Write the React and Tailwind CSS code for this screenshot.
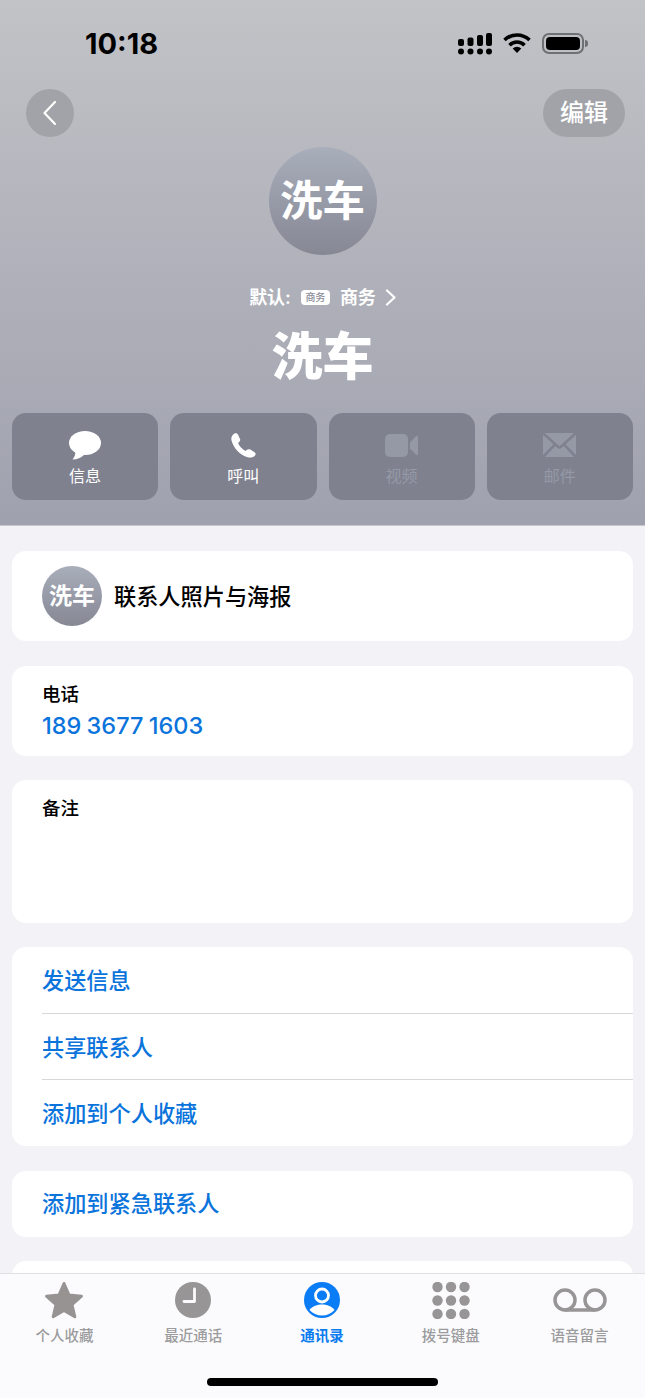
const FONT = "font-['Inter','Noto_Sans_CJK_SC',sans-serif]";

function Signal() {
  return (
    <svg width="34" height="22" viewBox="0 0 34 22" fill="black">
      <rect x="0" y="6" width="6" height="7" rx="2" />
      <rect x="9.500" y="4.500" width="6" height="8.500" rx="2" />
      <rect x="19" y="2" width="6" height="11" rx="2" />
      <rect x="28" y="0" width="6" height="13" rx="2" />
      <circle cx="3" cy="18.500" r="3" />
      <circle cx="12.500" cy="18.500" r="3" />
      <circle cx="22" cy="18.500" r="3" />
      <circle cx="31" cy="18.500" r="3" />
    </svg>
  );
}

function Wifi() {
  return (
    <svg width="28" height="20" viewBox="0 0 28 20" fill="none" stroke="black" strokeWidth="3.600">
      <path d="M1.500 7a18 18 0 0 1 25 0" />
      <path d="M6.500 12.200a10.500 10.500 0 0 1 15 0" />
      <path d="M14 20l-4.300-4.400a6 6 0 0 1 8.600 0z" fill="black" stroke="none" />
    </svg>
  );
}

function Battery() {
  return (
    <div className="flex items-center gap-[1px]">
      <div className="w-[42px] h-[21px] rounded-[7px] border-2 border-[#6f7073] p-[2px]">
        <div className="w-full h-full rounded-[4px] bg-black" />
      </div>
      <div className="w-[3px] h-[7px] rounded-r-full bg-[#6f7073]" />
    </div>
  );
}

function ActionButton({ label, dim, children }) {
  return (
    <div className="flex-1 h-[87px] rounded-[14px] bg-[#7f818f] flex flex-col items-center pt-[17px]">
      <div className="h-[30px] flex items-center justify-center">{children}</div>
      <span className={`mt-[5px] text-[16px] leading-[22px] font-normal ${dim ? "text-[#9599a6]" : "text-white"}`}>
        {label}
      </span>
    </div>
  );
}

function TabItem({ label, active, children }) {
  return (
    <div className="flex-1 flex flex-col items-center">
      <div className="h-[40px] flex items-center justify-center">{children}</div>
      <span className={`mt-[5px] text-[14.500px] leading-[22px] ${active ? "text-[#0a7cf0] font-bold" : "text-[#9c9c9e] font-medium"}`}>
        {label}
      </span>
    </div>
  );
}

function LinkRow({ label, divider }) {
  return (
    <div className={`h-[66.500px] flex items-center text-[22.200px] font-medium text-[#0a74dc] ${divider ? "pt-[2px] border-b border-[#d8d8dc]" : ""}`}>
      {label}
    </div>
  );
}

export default function App() {
  return (
    <div className={`relative h-[1398px] overflow-hidden bg-[#f2f2f7] ${FONT}`}>
      {/* Contact header */}
      <div className="h-[526px] bg-gradient-to-b from-[#c2c3c7] to-[#9fa1ae] flex flex-col items-center border-b border-[#c8c8cc]">
        <div className="w-full h-[89px] flex items-start justify-between pl-[85px] pr-[57px] pt-[27px]">
          <span className="text-[29px] leading-[34px] font-bold text-black">10:18</span>
          <div className="flex items-start gap-[11px] pt-[6px]">
            <Signal />
            <Wifi />
            <Battery />
          </div>
        </div>

        <div className="w-full flex items-center justify-between pr-[20px] pl-[26px] h-[48px]">
          <div className="w-[48px] h-[48px] rounded-full bg-[#a2a3a8] flex items-center justify-center">
            <svg width="16" height="26" viewBox="0 0 16 26" fill="none" stroke="white" strokeWidth="2.200" strokeLinecap="round" strokeLinejoin="round">
              <path d="M13 2 2.500 13 13 24" />
            </svg>
          </div>
          <div className="w-[82px] h-[48px] rounded-full bg-[#a2a3a8] flex items-center justify-center text-[24px] font-medium text-white">
            编辑
          </div>
        </div>

        <div className="mt-[10px] w-[108px] h-[108px] rounded-full bg-gradient-to-b from-[#a9aebb] to-[#868894] flex items-center justify-center text-[42.500px] leading-none font-bold text-white">
          洗车
        </div>

        <div className="mt-[30px] h-[24px] flex items-center font-semibold text-[18px] text-white">
          <span>默认:</span>
          <span className="ml-[10px] w-[29px] h-[15px] rounded-[4px] bg-white text-[#8b8d99] text-[10px] leading-[15px] text-center font-medium">商务</span>
          <span className="ml-[10px]">商务</span>
          <svg className="ml-[9px]" width="11" height="17" viewBox="0 0 11 17" fill="none" stroke="white" strokeWidth="2.200" strokeLinecap="round" strokeLinejoin="round">
            <path d="M2 1.500 9.500 8.500 2 15.500" />
          </svg>
        </div>

        <div className="mt-[17px] text-[51px] leading-[62px] font-black text-white">洗车</div>

        <div className="mt-[25px] w-full px-[12px] flex gap-[12px]">
          <ActionButton label="信息">
            <svg width="32" height="29" viewBox="0 0 32 29" fill="white">
              <ellipse cx="16" cy="12" rx="16" ry="12" />
              <path d="M6 20c1 3-.5 6-2.500 8.500 4.500 0 9-2 11.500-4.500z" />
            </svg>
          </ActionButton>
          <ActionButton label="呼叫">
            <svg width="26" height="25" viewBox="0 0 26 25" fill="white">
              <path d="M4.500.5C6-.2 7.500.5 8.200 2L10 6c.5 1.200.2 2.300-.8 3L8 10c1.500 3.500 4.500 6.500 7.500 8l1.500-1.200c1-.8 2.200-.8 3.300-.2l4.200 2.600c1.300.8 1.500 2.200.5 3.300-1.500 1.800-4 2.500-6.500 1.900C10 22.500 3.500 15 1.500 7.500.8 4.500 2 1.800 4.500.5z" />
            </svg>
          </ActionButton>
          <ActionButton label="视频" dim>
            <svg width="33" height="23" viewBox="0 0 33 23" fill="#9599a6">
              <rect x="0" y="0" width="23" height="23" rx="5" />
              <path d="M25 8.500 31 2.200c.8-.7 2-.3 2 .8v17c0 1.100-1.200 1.500-2 .8l-6-6.300z" />
            </svg>
          </ActionButton>
          <ActionButton label="邮件" dim>
            <svg width="33" height="24" viewBox="0 0 33 24" fill="#9599a6">
              <path d="M2 0h29L17.500 12.500c-.6.500-1.400.5-2 0z" />
              <path d="M0 2v20l10.500-10.800z" />
              <path d="M33 2v20L22.500 11.200z" />
              <path d="M2 24h29L20.800 13l-2.800 2.300c-.9.700-2.100.7-3 0L12.200 13z" />
            </svg>
          </ActionButton>
        </div>
      </div>

      {/* Detail cards */}
      <div className="px-[12px] pt-[25px] flex flex-col gap-[24.500px] text-black">
        <div className="h-[90px] rounded-[14px] bg-white flex items-center pl-[30px]">
          <div className="w-[60px] h-[60px] rounded-full bg-gradient-to-b from-[#a9aebb] to-[#868894] flex items-center justify-center text-[23px] font-bold text-white">
            洗车
          </div>
          <span className="ml-[12px] pt-[1px] text-[22.200px] font-medium">联系人照片与海报</span>
        </div>

        <div className="h-[90px] rounded-[14px] bg-white pl-[30px] pt-[16px]">
          <div className="text-[18.500px] leading-[24px] font-medium">电话</div>
          <div className="mt-[5px] text-[23.500px] leading-[30px] font-medium text-[#0a74dc] [word-spacing:-1px]">189 3677 1603</div>
        </div>

        <div className="h-[142.500px] rounded-[14px] bg-white pl-[30px] pt-[16px]">
          <div className="text-[18.500px] leading-[24px] font-medium">备注</div>
        </div>

        <div className="h-[199px] rounded-[14px] bg-white pl-[30px]">
          <LinkRow label="发送信息" divider />
          <LinkRow label="共享联系人" divider />
          <LinkRow label="添加到个人收藏" />
        </div>

        <div className="h-[66px] rounded-[14px] bg-white pl-[30px] pt-[1px] flex items-center text-[22.200px] font-medium text-[#0a74dc]">
          添加到紧急联系人
        </div>

        <div className="h-[90px] rounded-[14px] bg-white" />
      </div>

      {/* Tab bar sits over the scrolling list */}
      <div className="absolute left-0 right-0 bottom-0 h-[125px] bg-[#fbfbfd] border-t border-[#e0e0e3] flex flex-col">
        <div className="flex pt-[6px] pr-[1px]">
          <TabItem label="个人收藏">
            <svg width="40" height="38" viewBox="0 0 40 38" fill="#979393" stroke="#979393" strokeWidth="3" strokeLinejoin="round">
              <path d="M20 2.500l5 11.500 12.500 1.200-9.500 8.300 2.800 12.300L20 29.500 9.200 35.800 12 23.500 2.500 15.200 15 14z" />
            </svg>
          </TabItem>
          <TabItem label="最近通话">
            <svg width="36" height="36" viewBox="0 0 36 36">
              <circle cx="18" cy="18" r="18" fill="#979595" />
              <path d="M19.500 7v12.500H9" fill="none" stroke="#fbfbfd" strokeWidth="2.800" strokeLinecap="round" strokeLinejoin="round" />
            </svg>
          </TabItem>
          <TabItem label="通讯录" active>
            <svg width="36" height="36" viewBox="0 0 36 36">
              <circle cx="18" cy="18" r="18" fill="#0a7cf5" />
              <circle cx="18" cy="13.500" r="6.500" fill="none" stroke="white" strokeWidth="2.800" />
              <path d="M5.500 28c3-4 8-5.500 12.500-5.500s9.500 1.500 12.500 5.500c-3 3.500-7.500 5.500-12.500 5.500S8.500 31.500 5.500 28z" fill="white" />
            </svg>
          </TabItem>
          <TabItem label="拨号键盘">
            <svg width="38" height="37" viewBox="0 0 38 37" fill="#979595">
              <circle cx="5.500" cy="5" r="5.200" /><circle cx="19" cy="5" r="5.200" /><circle cx="32.500" cy="5" r="5.200" />
              <circle cx="5.500" cy="18.500" r="5.200" /><circle cx="19" cy="18.500" r="5.200" /><circle cx="32.500" cy="18.500" r="5.200" />
              <circle cx="5.500" cy="32" r="5.200" /><circle cx="19" cy="32" r="5.200" /><circle cx="32.500" cy="32" r="5.200" />
            </svg>
          </TabItem>
          <TabItem label="语音留言">
            <svg width="54" height="24" viewBox="0 0 54 24" fill="none" stroke="#979595" strokeWidth="3.500">
              <circle cx="12" cy="12" r="10" />
              <circle cx="42" cy="12" r="10" />
              <path d="M12 22h30" />
            </svg>
          </TabItem>
        </div>
        <div className="mt-auto mb-[12px] mx-auto w-[231px] h-[8px] rounded-full bg-black" />
      </div>
    </div>
  );
}
